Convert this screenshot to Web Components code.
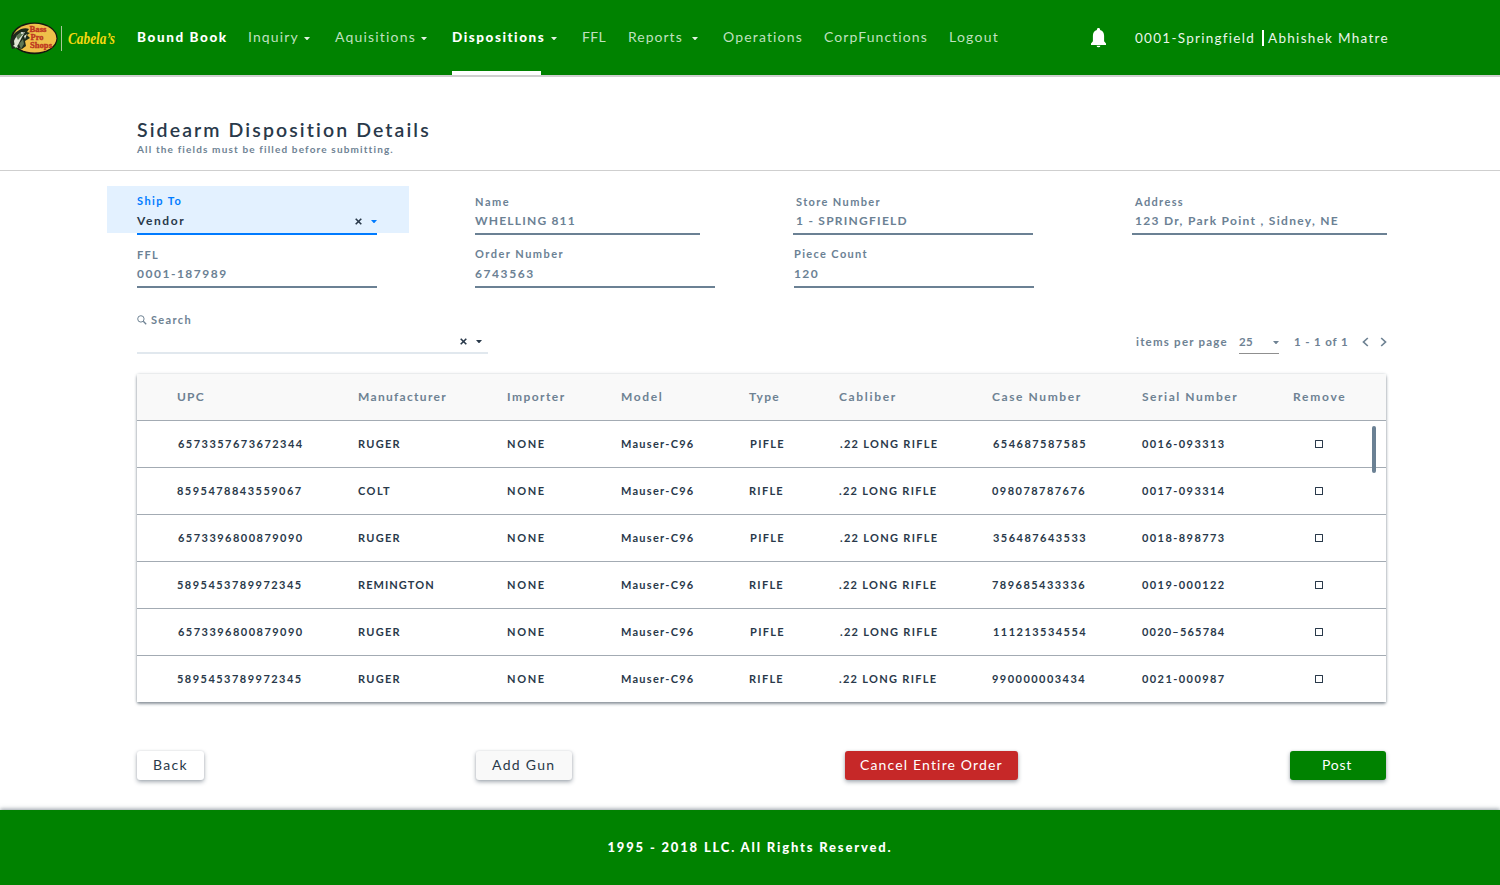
<!DOCTYPE html>
<html lang="en">
<head>
<meta charset="utf-8">
<title>Bound Book - Sidearm Disposition Details</title>
<style>
html,body{margin:0;height:100%;background:#fff}
body{font-family:Lato,"Open Sans",sans-serif;color:#29394a;overflow:hidden}
</style>
</head>
<body>
<bb-app></bb-app>
<script>
class Base extends HTMLElement {
  connectedCallback() {
    if (this.shadowRoot) return;
    this.attachShadow({ mode: 'open' });
    const t = document.createElement('template');
    t.innerHTML = `<style>*{box-sizing:border-box}${this.css()}</style>${this.html()}`;
    this.shadowRoot.append(t.content.cloneNode(true));
    this.ready();
  }
  a(n, d = '') { return this.hasAttribute(n) ? this.getAttribute(n) : d; }
  css() { return ''; }
  html() { return '<slot></slot>'; }
  ready() {}
}

/* Single line of text, tracked out to the width given in "w". */
class TrackedText extends Base {
  css() { return `:host{display:block;white-space:pre;line-height:20px}span{display:inline-block}`; }
  html() { return `<span>${this.a('text')}</span>`; }
  ready() {
    const s = this.shadowRoot.querySelector('span');
    const w = parseFloat(this.a('w'));
    const n = this.a('text').length;
    if (!w || n < 2) return;
    s.style.fontVariantLigatures = 'none';
    const natural = s.getBoundingClientRect().width;
    s.style.letterSpacing = ((w - 0.3 - natural) / (n - 1)).toFixed(3) + 'px';
  }
}
customElements.define('tracked-text', TrackedText);

class UiCaret extends Base {
  css() { return `:host{display:block;width:6px;height:3px;color:inherit}svg{display:block}`; }
  html() { return `<svg width="6" height="3" viewBox="0 0 6 3"><path d="M0 0h6L3.6 2.8Q3 3.2 2.4 2.8z" fill="currentColor"/></svg>`; }
}
customElements.define('ui-caret', UiCaret);

class UiCross extends Base {
  css() { return `:host{display:block;width:7px;height:7px}svg{display:block}`; }
  html() { return `<svg width="7" height="7" viewBox="0 0 7 7"><path d="M.7.7l5.6 5.6M6.3.7L.7 6.3" stroke="#29394a" stroke-width="1.6"/></svg>`; }
}
customElements.define('ui-cross', UiCross);

class BrandLogo extends Base {
  css() { return `:host{display:block;height:75px}svg{display:block}`; }
  html() { return `<svg width="137" height="75" viewBox="0 0 137 75">
    <ellipse cx="34.3" cy="38.3" rx="23.3" ry="15.9" fill="#14180f"/>
    <ellipse cx="34.6" cy="38.2" rx="21.8" ry="14.4" fill="#efc04a"/>
    <path d="M10 42C11 36 15 32 21 29c3-1 6-1 8 0l-2 3 3 1-3 2 3 3-5 3 1 5-4 3-6-1-4 1z" fill="#1d2a1b"/>
    <path d="M14 41c2-5 5-8 11-9l-3 5-4 8-3 3zM24 36l3-2-2 5zM13 46l3-3 2 5z" fill="#dfe5d4"/>
    <path d="M16 36l5-4 3 1-6 7zM19 44l4-5 1 5-3 5z" fill="#5d7653"/>
    <circle cx="22" cy="33" r=".9" fill="#fff"/>
    <g fill="#bd3420" font-family="Liberation Serif,serif" font-weight="700" font-size="9.2" stroke="#bd3420" stroke-width=".35">
      <text x="29.500" y="32.200" textLength="17" lengthAdjust="spacingAndGlyphs">Bass</text>
      <text x="30.500" y="40.200" textLength="13" lengthAdjust="spacingAndGlyphs">Pro</text>
      <text x="30" y="48.200" textLength="22" lengthAdjust="spacingAndGlyphs">Shops</text>
    </g>
    <rect x="61" y="26" width="1" height="25" fill="#a9c79a"/>
    <text x="68" y="43.600" textLength="47" lengthAdjust="spacingAndGlyphs" font-family="Liberation Serif,serif" font-style="italic" font-weight="700" font-size="16" fill="#f8d911">Cabela’s</text>
  </svg>`; }
}
customElements.define('brand-logo', BrandLogo);

class NavItem extends Base {
  css() { return `:host{display:flex;align-items:center;height:75px;color:#bfe0bf;font-size:14px}
    :host([strong]){color:#fff;font-weight:900;font-size:13.5px}
    .in{height:75px;display:flex;align-items:center;border-bottom:4px solid transparent;padding-top:4px}
    :host([active]) .in{border-bottom-color:#fff;width:89px}
    tracked-text{flex:none;margin-top:-2px}
    ui-caret{margin-top:2px;flex:none;color:#e3f2e3;margin-left:${this.a('gap', '5')}px}`; }
  html() { return `<div class="in"><tracked-text text="${this.a('text')}" w="${this.a('w')}"></tracked-text>${this.hasAttribute('gap') ? '<ui-caret></ui-caret>' : ''}</div>`; }
}
customElements.define('nav-item', NavItem);

class AppHeader extends Base {
  css() { return `:host{display:grid;height:77px;border-bottom:2px solid #cfcfcf;background:#008200;align-items:center;
    grid-template-columns:137px 111px 87px 117px 130px 46px 95px 101px 125px 142px 44px 127px 6px 1fr}
    .bell{display:block}
    .user{color:#eaf5ea;font-size:13.5px}
    .bar{width:2px;height:16px;background:#fff;margin-top:1px}`; }
  html() { return `<brand-logo></brand-logo>
    <nav-item strong text="Bound Book" w="89.5"></nav-item>
    <nav-item text="Inquiry" w="50" gap="5"></nav-item>
    <nav-item text="Aquisitions" w="80" gap="5"></nav-item>
    <nav-item strong active text="Dispositions" w="92" gap="5.500"></nav-item>
    <nav-item text="FFL" w="24"></nav-item>
    <nav-item text="Reports" w="54" gap="9"></nav-item>
    <nav-item text="Operations" w="79"></nav-item>
    <nav-item text="CorpFunctions" w="103"></nav-item>
    <nav-item text="Logout" w="49"></nav-item>
    <svg class="bell" width="15" height="20" viewBox="0 0 15 20"><path d="M7.500 0c1 0 1.600.7 1.600 1.500v.6c2.600.6 4 2.800 4 5.600v5.600L15 15.400V17H0v-1.600l1.900-2.100V7.700c0-2.800 1.400-5 4-5.600v-.6C5.900.7 6.500 0 7.500 0zM5.600 17.700h3.800a1.900 1.500 0 0 1-3.800 0z" fill="#fff"/></svg>
    <tracked-text class="user" text="0001-Springfield" w="119"></tracked-text>
    <div class="bar"></div>
    <tracked-text class="user" text="Abhishek Mhatre" w="120"></tracked-text>`; }
}
customElements.define('app-header', AppHeader);

class PageTitle extends Base {
  css() { return `:host{display:block;height:94px;padding:41px 0 0 137px;border-bottom:1px solid #cfcfcf}
    .t{font-size:19.5px;font-weight:600;line-height:23px;color:#29394a}
    .s{font-size:10px;font-weight:700;line-height:16px;color:#6e8293}`; }
  html() { return `<tracked-text class="t" text="Sidearm Disposition Details" w="292"></tracked-text>
    <tracked-text class="s" text="All the fields must be filled before submitting." w="256"></tracked-text>`; }
}
customElements.define('page-title', PageTitle);

class FormField extends Base {
  css() { return `:host{display:block;height:50px;color:#6b8194;width:${this.a('width')}px;border-bottom:2px solid #6b8194}
    .b{padding-left:${this.a('inset', '0')}px}
    .l{font-size:11px;font-weight:700;line-height:18px;padding-top:${this.a('drop', '0')}px}
    .r{display:flex;align-items:center;height:20px;margin-top:${1 - this.a('drop', '0') - this.a('lift', '0')}px}
    .v{font-size:12px;font-weight:700}
    :host([active]){border-color:#007bff}
    .end{margin-left:auto;display:flex;align-items:center;gap:9px;padding-top:1px}
    :host([active]) .l,ui-caret{color:#007bff}
    :host([active]) .v{color:#29394a}`; }
  html() { return `<div class="b"><tracked-text class="l" text="${this.a('label')}" w="${this.a('lw')}"></tracked-text>
    <div class="r"><tracked-text class="v" text="${this.a('value')}" w="${this.a('vw')}"></tracked-text>${this.hasAttribute('active') ? '<div class="end"><ui-cross></ui-cross><ui-caret></ui-caret></div>' : ''}</div></div>`; }
}
customElements.define('form-field', FormField);

class DetailForm extends Base {
  css() { return `:host{display:grid;grid-template-columns:368px 318px 339px 1fr;grid-template-rows:49px 53px;padding:15px 0 0 107px;height:132px}
    .ship{width:302px;height:47px;background:#e3f1ff;padding:6px 0 0 30px}
    .ship form-field{height:43px}
    .c{padding-top:7px}.c form-field{height:42px}
    .o{padding:10px 0 0 0}.o form-field{height:43px}`; }
  html() { return `<div class="ship"><form-field active label="Ship To" lw="44" value="Vendor" vw="47" width="240"></form-field></div>
    <div class="c"><form-field lift="1" label="Name" lw="34" value="WHELLING 811" vw="100" width="225"></form-field></div>
    <div class="c"><form-field lift="1" label="Store Number" lw="84" value="1 - SPRINGFIELD" vw="111" width="240" inset="3"></form-field></div>
    <div class="c"><form-field lift="1" label="Address" lw="48" value="123 Dr, Park Point , Sidney, NE" vw="203" width="255" inset="3"></form-field></div>
    <div class="o" style="padding-left:30px"><form-field label="FFL" lw="21" value="0001-187989" vw="89.500" width="240" drop="1"></form-field></div>
    <div class="o"><form-field label="Order Number" lw="88" value="6743563" vw="58.500" width="240"></form-field></div>
    <div class="o" style="padding-left:1px"><form-field label="Piece Count" lw="73" value="120" vw="24" width="240"></form-field></div>`; }
}
customElements.define('detail-form', DetailForm);

class SearchBox extends Base {
  css() { return `:host{display:block;width:351px;height:44px;border-bottom:2px solid #e1e8ee;color:#6e8293}
    .l{display:flex;align-items:center;gap:4px;height:20px}
    .l tracked-text{font-size:11px;font-weight:700}
    .e{display:flex;justify-content:flex-end;align-items:center;gap:9px;height:20px;padding:2px 6px 0 0;color:#29394a}`; }
  html() { return `<div class="l"><svg width="10" height="10" viewBox="0 0 10 10" fill="none" stroke="currentColor"><circle cx="3.900" cy="3.900" r="3.200" stroke-width="1"/><path d="M6.300 6.300L9.200 9.200" stroke-width="1.300"/></svg><tracked-text text="Search" w="40"></tracked-text></div>
    <div class="e"><ui-cross></ui-cross><ui-caret></ui-caret></div>`; }
}
customElements.define('search-box', SearchBox);

class PagePager extends Base {
  css() { return `:host{display:grid;grid-template-columns:103px 55px 68px 18px 7px;align-items:center;height:24px;margin-top:20px;font-size:11.5px;font-weight:700;color:#6e8293;width:251px}
    .n{width:40px;height:24px;border-bottom:1px solid #8f8f8f;display:flex;align-items:center;justify-content:space-between}
    .n ui-caret{margin-top:2px}
    svg{display:block}`; }
  html() { return `<tracked-text text="items per page" w="91"></tracked-text>
    <div class="n"><tracked-text text="25" w="14"></tracked-text><ui-caret></ui-caret></div>
    <tracked-text text="1 - 1 of 1" w="54"></tracked-text>
    <svg width="7" height="10" viewBox="0 0 7 10"><path d="M5.800 1L1.500 5l4.300 4" fill="none" stroke="currentColor" stroke-width="1.700"/></svg>
    <svg width="7" height="10" viewBox="0 0 7 10"><path d="M1.200 1l4.300 4-4.300 4" fill="none" stroke="currentColor" stroke-width="1.700"/></svg>`; }
}
customElements.define('page-pager', PagePager);

class GunRow extends Base {
  css() { return `:host{display:grid;height:47px;padding-left:40px;align-items:center;border-bottom:1px solid #a3abb3;
    grid-template-columns:181px 149px 114px 128px 90px 153px 150px 151px 1fr;font-size:11px;font-weight:700;color:#29394a;background:#fff}
    :host([head]){background:#f9f9f9;font-size:12px;color:#6e8293}
    :host([last]){border-bottom:0}
    .off{padding-left:1px}
    .box{width:8px;height:8px;border:1px solid #29394a;margin:0 0 0 22px;border-radius:.5px}`; }
  html() {
    const cells = this.a('cells').split('|'), ws = this.a('ws').split('|'), odd = this.hasAttribute('odd');
    return cells.map((c, i) => `<tracked-text class="${odd && [0, 4, 5, 6].includes(i) ? 'off' : ''}" text="${c}" w="${ws[i]}"></tracked-text>`).join('')
      + (this.hasAttribute('head') ? '' : '<div class="box"></div>');
  }
}
customElements.define('gun-row', GunRow);

class GunTable extends Base {
  css() { return `:host{display:block;position:relative;width:1249px;height:328px;border-radius:2px;box-shadow:0 2px 3px rgba(41,57,74,.5),0 0 3px rgba(41,57,74,.22)}
    .bar{position:absolute;left:1235px;top:52px;width:4px;height:47px;border-radius:2px;background:#6b8194}
    gun-row[last]{height:46px}`; }
  html() {
    const rows = [
      ['6573357673672344', 'RUGER', 'PIFLE', '654687587585', '0016-093313'],
      ['8595478843559067', 'COLT', 'RIFLE', '098078787676', '0017-093314'],
      ['6573396800879090', 'RUGER', 'PIFLE', '356487643533', '0018-898773'],
      ['5895453789972345', 'REMINGTON', 'RIFLE', '789685433336', '0019-000122'],
      ['6573396800879090', 'RUGER', 'PIFLE', '111213534554', '0020–565784'],
      ['5895453789972345', 'RUGER', 'RIFLE', '990000003434', '0021-000987']];
    const mw = { RUGER: 42, COLT: 32, REMINGTON: 76 };
    return `<gun-row head cells="UPC|Manufacturer|Importer|Model|Type|Cabliber|Case Number|Serial Number|Remove" ws="27|88|57.500|41|30|56.500|88.500|95|52"></gun-row>`
      + rows.map((r, i) => `<gun-row ${i % 2 ? '' : 'odd'} ${i === 5 ? 'last' : ''} cells="${r[0]}|${r[1]}|NONE|Mauser-C96|${r[2]}|.22 LONG RIFLE|${r[3]}|${r[4]}" ws="124.500|${mw[r[1]]}|37.500|72.500|34|97.500|93|82.500"></gun-row>`).join('')
      + '<div class="bar"></div>';
  }
}
customElements.define('gun-table', GunTable);

class UiButton extends Base {
  css() { return `:host{display:flex;align-items:center;height:29px;width:${this.a('width')}px;padding:0 0 2px ${this.a('pad')}px;
    border-radius:3px;background:${this.a('bg')};color:${this.a('fg', '#29394a')};font-size:14px;box-sizing:border-box;box-shadow:0 2px 4px rgba(41,57,74,.42),0 0 2px rgba(41,57,74,.12)}`; }
  html() { return `<tracked-text text="${this.a('text')}" w="${this.a('w')}"></tracked-text>`; }
}
customElements.define('ui-button', UiButton);

class ActionBar extends Base {
  css() { return `:host{display:grid;grid-template-columns:339px 369px 445px 1fr;padding:49px 0 0 137px;height:108px}`; }
  html() { return `<ui-button text="Back" w="34" width="67" pad="16" bg="#fff"></ui-button>
    <ui-button text="Add Gun" w="62.500" width="96" pad="16" bg="#f9f9f9"></ui-button>
    <ui-button text="Cancel Entire Order" w="142" width="173" pad="15" bg="#c62828" fg="#fff"></ui-button>
    <ui-button text="Post" w="29.500" width="96" pad="32" bg="#008200" fg="#fff"></ui-button>`; }
}
customElements.define('action-bar', ActionBar);

class AppFooter extends Base {
  css() { return `:host{display:flex;height:75px;padding-bottom:2px;box-sizing:border-box;background:#008200;color:#fff;font-size:13px;font-weight:900;justify-content:center;align-items:center;box-shadow:0 -1px 4px rgba(41,57,74,.5)}`; }
  html() { return `<tracked-text text="1995 - 2018 LLC. All Rights Reserved." w="283.500"></tracked-text>`; }
}
customElements.define('app-footer', AppFooter);

class BbApp extends Base {
  css() { return `:host{display:flex;flex-direction:column;width:1500px;height:885px;background:#fff;overflow:hidden}
    :host>*{flex:none}
    .tools{display:flex;padding:7px 0 0 137px;height:71px}
    page-pager{margin-left:648px}
    gun-table{margin-left:137px}`; }
  html() { return `<app-header></app-header><page-title></page-title><detail-form></detail-form>
    <div class="tools"><search-box></search-box><page-pager></page-pager></div>
    <gun-table></gun-table><action-bar></action-bar><app-footer></app-footer>`; }
}
customElements.define('bb-app', BbApp);
</script>
</body>
</html>
